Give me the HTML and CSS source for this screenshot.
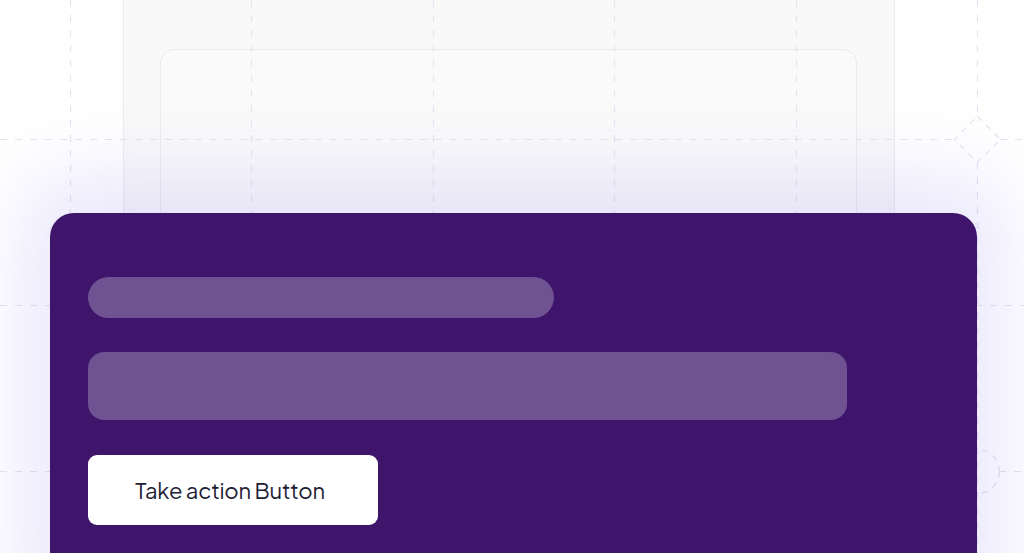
FILE: index.html
```html
<!DOCTYPE html>
<html lang="en">
<head>
<meta charset="utf-8">
<title>Take action</title>
<link rel="stylesheet" href="styles.css">
</head>
<body>
<div class="scene">
  <div class="panel"><div class="panel-inner"></div></div>
  <svg class="grid" width="1024" height="553" viewBox="0 0 1024 553" aria-hidden="true">
    <g fill="none" stroke="#e5e3f0" stroke-width="1.2" stroke-dasharray="7 8">
      <line x1="70.5" y1="0" x2="70.5" y2="553"/>
      <line x1="251.5" y1="0" x2="251.5" y2="553"/>
      <line x1="433.5" y1="0" x2="433.5" y2="553"/>
      <line x1="614.5" y1="0" x2="614.5" y2="553"/>
      <line x1="796.5" y1="0" x2="796.5" y2="553"/>
      <line x1="977.5" y1="0" x2="977.5" y2="116"/>
      <line x1="977.5" y1="162" x2="977.5" y2="553"/>
      <line x1="0" y1="139.5" x2="954" y2="139.5"/>
      <line x1="1000" y1="139.5" x2="1024" y2="139.5"/>
      <line x1="0" y1="305.5" x2="1024" y2="305.5"/>
      <line x1="0" y1="471.5" x2="955" y2="471.5"/>
      <line x1="999" y1="471.5" x2="1024" y2="471.5"/>
      <path d="M977.5 116.5 L1000.5 139.5 L977.5 162.5 L954.5 139.5 Z" stroke-dasharray="6 6"/>
      <circle cx="977.5" cy="471.5" r="22" stroke-dasharray="6 6"/>
    </g>
  </svg>
  <section class="card">
    <div class="bar bar-short"></div>
    <div class="bar bar-long"></div>
    <button class="action" type="button">Take action Button</button>
  </section>
</div>
</body>
</html>
```
FILE: styles.css
```css
html, body {
  margin: 0;
  padding: 0;
  background: #ffffff;
  overflow: hidden;
}
body {
  width: 1024px;
  height: 553px;
  font-family: "Plus Jakarta Sans", Inter, "Liberation Sans", sans-serif;
}
.scene {
  position: relative;
  width: 1024px;
  height: 553px;
  box-sizing: border-box;
  padding: 213px 47px 0 50px;
  overflow: hidden;
}
.panel {
  position: absolute;
  left: 123px;
  top: 0;
  width: 772px;
  height: 300px;
  box-sizing: border-box;
  background: #f9f9f9;
  border-left: 1px solid #ececef;
  border-right: 1px solid #ececef;
  padding: 49px 37px 0 36px;
}
.panel-inner {
  height: 300px;
  border: 1px solid #ebebed;
  border-radius: 14px;
  background: #fafafa;
}
.grid {
  position: absolute;
  left: 0;
  top: 0;
}
.card {
  position: relative;
  height: 400px;
  background: #3e156b;
  border-radius: 24px;
  box-sizing: border-box;
  padding: 64px 38px 0 38px;
  display: flex;
  flex-direction: column;
  align-items: flex-start;
  box-shadow: 0 -10px 70px 30px rgba(120, 105, 235, 0.15);
}
.bar {
  background: #6f5291;
}
.bar-short {
  width: 466px;
  height: 41px;
  border-radius: 21px;
}
.bar-long {
  margin-top: 34px;
  width: 759px;
  height: 68px;
  border-radius: 16px;
}
.action {
  margin-top: 35px;
  width: 290px;
  height: 70px;
  border: none;
  border-radius: 9px;
  background: #ffffff;
  color: #1d2034;
  font-family: "Plus Jakarta Sans", Inter, "Liberation Sans", sans-serif;
  font-size: 22px;
  font-weight: 400;
  letter-spacing: -0.2px;
  padding: 0 6px 0 0;
  cursor: pointer;
}
```
